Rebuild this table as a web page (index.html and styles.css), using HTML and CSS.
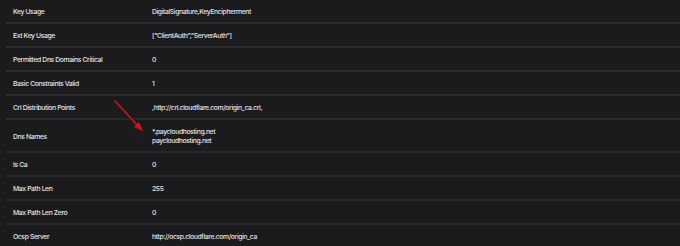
FILE: index.html
```html
<!DOCTYPE html>
<html>
<head>
<meta charset="utf-8">
<link rel="stylesheet" href="styles.css">
</head>
<body>
<div class="table">
  <div class="row"><div class="label">Key Usage</div><div class="value">DigitalSignature,KeyEncipherment</div></div>
  <div class="row"><div class="label">Ext Key Usage</div><div class="value">["ClientAuth","ServerAuth"]</div></div>
  <div class="row"><div class="label">Permitted Dns Domains Critical</div><div class="value">0</div></div>
  <div class="row"><div class="label">Basic Constraints Valid</div><div class="value">1</div></div>
  <div class="row"><div class="label">Crl Distribution Points</div><div class="value">,http://crl.cloudflare.com/origin_ca.crl,</div></div>
  <div class="row multi"><div class="label">Dns Names</div><div class="value"><div>*.paycloudhosting.net</div><div>paycloudhosting.net</div></div></div>
  <div class="row"><div class="label">Is Ca</div><div class="value">0</div></div>
  <div class="row"><div class="label">Max Path Len</div><div class="value">255</div></div>
  <div class="row"><div class="label">Max Path Len Zero</div><div class="value">0</div></div>
  <div class="row"><div class="label">Ocsp Server</div><div class="value">http://ocsp.cloudflare.com/origin_ca</div></div>
</div>
<svg class="arrow" width="680" height="246" viewBox="0 0 680 246">
  <line x1="115" y1="101" x2="138" y2="126" stroke="#d41414" stroke-width="1.6" stroke-linecap="round"/>
  <polygon points="143,131 134,127 139,122" fill="#d41414"/>
</svg>
</body>
</html>
```
FILE: styles.css
```css
html, body {
  margin: 0;
  padding: 0;
  background: #1b1b1d;
  width: 680px;
  height: 246px;
  overflow: hidden;
}
body {
  font-family: Inter, "Noto Sans", sans-serif;
  font-size: 6.8px;
  font-weight: 500;
  letter-spacing: -0.38px;
  color: #e2e2e6;
  position: relative;
}
.table {
  margin-left: 6px;
  display: flex;
  flex-direction: column;
}
.row {
  display: grid;
  grid-template-columns: 139px 1fr;
  align-items: center;
  min-height: 24px;
  padding: 1px 0 0 7px;
  border-bottom: 2px solid #28282b;
  box-sizing: border-box;
  line-height: 9px;
}
.row.multi {
  padding-top: 7px;
  padding-bottom: 6px;
}
.arrow {
  position: absolute;
  left: 0;
  top: 0;
  pointer-events: none;
}
```
